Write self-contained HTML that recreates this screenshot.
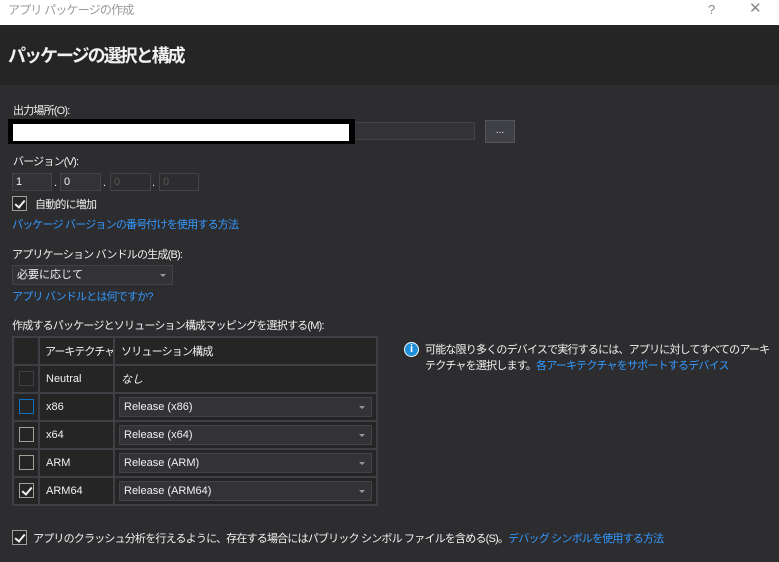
<!DOCTYPE html>
<html><head><meta charset="utf-8"><style>
*{margin:0;padding:0;box-sizing:border-box}
body{width:779px;height:562px;background:#2d2d30;font-family:"Liberation Sans","Noto Sans CJK JP",sans-serif;font-size:11px;letter-spacing:-0.8px;color:#f1f1f1;position:relative;overflow:hidden}
.a{position:absolute;white-space:nowrap;line-height:16px}
.lk{color:#3399ff}
.in{position:absolute;background:#333337;border:1px solid #434346;letter-spacing:0}
.cb{position:absolute;width:15px;height:15px;border:1px solid #a0a0a0;background:#252526}
.ck::after{content:"";position:absolute;left:4px;top:1px;width:4px;height:8px;border:solid #f1f1f1;border-width:0 2px 2px 0;transform:rotate(40deg)}
.dd::after{content:"";position:absolute;right:6px;top:8px;border:3px solid transparent;border-top:3px solid #999}
td{border:2px solid #3f3f46;background:#252526;padding:0 6px;height:28px;white-space:nowrap;overflow:hidden;letter-spacing:0}
table{position:absolute;left:12px;top:336px;border-collapse:collapse;border:2px solid #3f3f46;table-layout:fixed;width:366px}
</style></head><body>
<div class="a" style="left:0;top:0;width:779px;height:25px;background:#fff"></div>
<div class="a" style="left:8px;top:2px;color:#999;font-size:12px">アプリ パッケージの作成</div>
<div class="a" style="left:708px;top:2px;color:#888;font-size:13px">?</div>
<div class="a" style="left:749px;top:1px;color:#888;font-size:15px">✕</div>
<div class="a" style="left:0;top:25px;width:779px;height:60px;background:#252526"></div>
<div class="a" style="left:8px;top:45px;font-size:18px;font-weight:bold;line-height:22px;letter-spacing:-2px">パッケージの選択と構成</div>

<div class="a" style="left:13px;top:103px">出力場所(O):</div>
<div class="in" style="left:340px;top:122px;width:135px;height:18px"></div>
<div class="a" style="left:8px;top:119px;width:347px;height:25px;background:#000"></div>
<div class="a" style="left:13px;top:124px;width:336px;height:17px;background:#fff"></div>
<div class="in" style="left:485px;top:120px;width:30px;height:23px;background:#3f3f46;border-color:#555;text-align:center;font-size:10px;line-height:20px">...</div>

<div class="a" style="left:13px;top:154px">バージョン(V):</div>
<div class="in" style="left:12px;top:173px;width:40px;height:18px;padding-left:3px;line-height:16px">1</div>
<div class="a" style="left:54px;top:175px">.</div>
<div class="in" style="left:60px;top:173px;width:41px;height:18px;padding-left:3px;line-height:16px">0</div>
<div class="a" style="left:103px;top:175px">.</div>
<div class="in" style="left:110px;top:173px;width:41px;height:18px;padding-left:3px;line-height:16px;background:#2d2d30;color:#555">0</div>
<div class="a" style="left:152px;top:175px">.</div>
<div class="in" style="left:159px;top:173px;width:40px;height:18px;padding-left:3px;line-height:16px;background:#2d2d30;color:#555">0</div>

<div class="cb ck" style="left:12px;top:196px"></div>
<div class="a" style="left:35px;top:197px">自動的に増加</div>
<div class="a lk" style="left:12px;top:217px">パッケージ バージョンの番号付けを使用する方法</div>

<div class="a" style="left:12px;top:247px">アプリケーション バンドルの生成(B):</div>
<div class="in dd" style="left:12px;top:265px;width:161px;height:20px;padding-left:4px;line-height:18px">必要に応じて</div>
<div class="a lk" style="left:12px;top:289px">アプリ バンドルとは何ですか?</div>

<div class="a" style="left:12px;top:318px">作成するパッケージとソリューション構成マッピングを選択する(M):</div>
<table>
<colgroup><col style="width:26px"><col style="width:75px"><col style="width:263px"></colgroup>
<tr><td></td><td style="letter-spacing:-1px;padding:0 3px 0 5px">アーキテクチャ</td><td style="letter-spacing:-0.8px">ソリューション構成</td></tr>
<tr><td style="position:relative"><div class="cb" style="left:5px;top:5px;border-color:#3f3f46"></div></td><td>Neutral</td><td><i>なし</i></td></tr>
<tr><td style="position:relative"><div class="cb" style="left:5px;top:5px;border-color:#0e70c0"></div></td><td>x86</td><td style="padding:0 4px"><div class="in dd" style="position:relative;height:20px;padding-left:4px;line-height:18px">Release (x86)</div></td></tr>
<tr><td style="position:relative"><div class="cb" style="left:5px;top:5px"></div></td><td>x64</td><td style="padding:0 4px"><div class="in dd" style="position:relative;height:20px;padding-left:4px;line-height:18px">Release (x64)</div></td></tr>
<tr><td style="position:relative"><div class="cb" style="left:5px;top:5px"></div></td><td>ARM</td><td style="padding:0 4px"><div class="in dd" style="position:relative;height:20px;padding-left:4px;line-height:18px">Release (ARM)</div></td></tr>
<tr><td style="position:relative"><div class="cb ck" style="left:5px;top:5px"></div></td><td>ARM64</td><td style="padding:0 4px"><div class="in dd" style="position:relative;height:20px;padding-left:4px;line-height:18px">Release (ARM64)</div></td></tr>
</table>

<div class="a" style="left:404px;top:342px;width:15px;height:15px;border-radius:50%;background:#1e90d8;border:1px solid #fff;color:#fff;font-weight:bold;font-size:11px;line-height:13px;text-align:center;letter-spacing:0">i</div>
<div class="a" style="left:425px;top:342px">可能な限り多くのデバイスで実行するには、アプリに対してすべてのアーキ</div>
<div class="a" style="left:425px;top:358px">テクチャを選択します。<span class="lk">各アーキテクチャをサポートするデバイス</span></div>

<div class="cb ck" style="left:12px;top:530px"></div>
<div class="a" style="left:33px;top:531px">アプリのクラッシュ分析を行えるように、存在する場合にはパブリック シンボル ファイルを含める(S)。<span class="lk">デバッグ シンボルを使用する方法</span></div>
</body></html>
